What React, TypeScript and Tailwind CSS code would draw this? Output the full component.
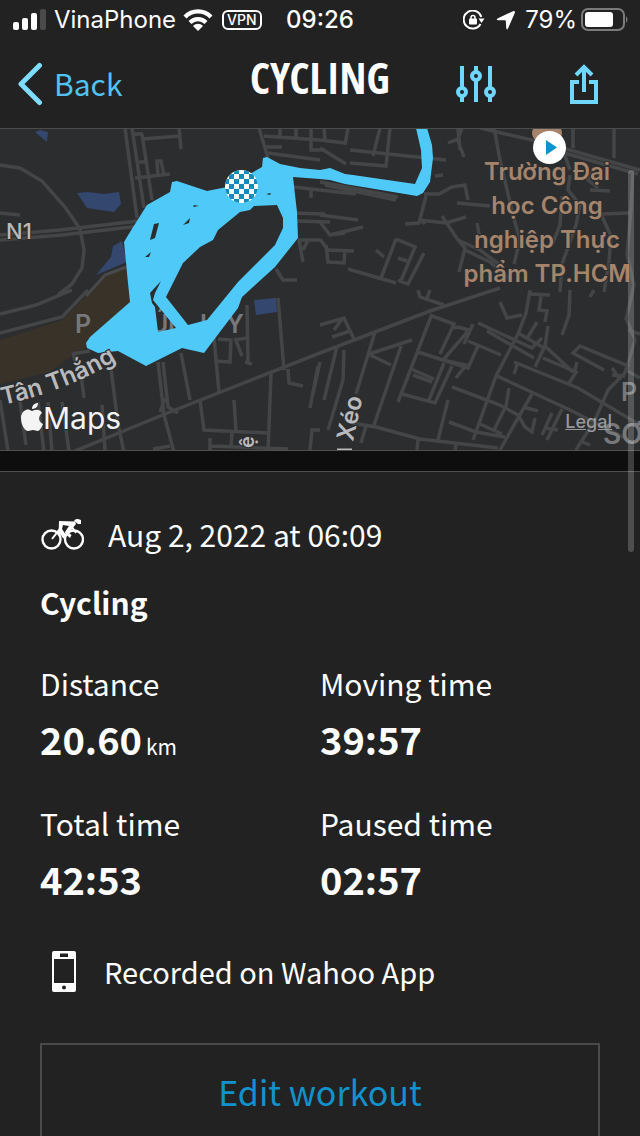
import React from "react";

const roads = [
  "M0 165 L20 168 L42 181 L65 207 L80 229 L84 250 L82 268 L72 284 L58 295",
  "M0 235 L60 230 L138 221",
  "M0 240 L62 235 L140 226 M288 213 L325 214",
  "M0 213 L20 215",
  "M125 128 L137 218",
  "M132 128 L144 208",
  "M142 134 L152 200",
  "M134 134 L143 134 M142 139 L180 136 M179 128 L181 149 M139 162 L145 162 M135 178 L170 174 M158 175 L157 161 L161 161 L164 175",
  "M259 128 L268 158",
  "M264 136 L320 140 M280 129 L280 137 M296 129 L296 138 M311 129 L311 150 L325 150 M266 147 L282 147 M268 153 L320 160 M294 187 L320 190 M311 190 L311 198",
  "M298 240 L320 240 M299 240 L303 262 M308 240 L303 250 M276 269 L283 280 L297 280",
  "M297 221 L330 222 M325 185 L396 200",
  "M320 140 L345 143 M324 128 L325 140 M348 128 L345 145 M380 128 L373 156 M390 128 L386 166 L350 163 M350 150 L446 160 M320 148 L346 164",
  "M320 190 L356 194 M320 182 L398 197",
  "M426 196 L419 223 L405 224 M419 218 L425 224 M435 176 L443 175",
  "M424 194 L439 194 L452 187 L465 185 L468 200 M457 203 L490 206",
  "M448 143 L458 139 L462 128 M458 141 L464 157 M458 128 L460 150",
  "M320 215 L358 220 M320 222 L330 235 L363 227 M329 235 L345 233 M320 239 L328 250 L354 251 M326 245 L328 262 L344 263 L345 250 M348 269 L396 283 M396 239 L381 278 M396 239 L415 247 L400 283 M398 258 L407 261 M376 250 L384 257 M424 253 L408 284 L398 280",
  "M419 220 L446 223 L466 217 M442 216 L458 240 L465 248 L459 272 M458 240 L480 250 L500 265 M465 250 L490 262 L510 280",
  "M494 128 L500 160 L513 215 L520 240 L514 264 M477 223 L480 239",
  "M550 144 L563 150 L570 170 M562 196 L560 225 L552 245 M590 190 L610 191 M600 214 L630 213",
  "M573 128 L573 148 M614 128 L614 158 M480 128 L545 143 L640 170 M540 146 L638 174",
  "M570 175 L568 190 L580 205 L576 225 L562 264 L560 292 M600 212 L611 236 L609 262 L604 292",
  "M594 167 L588 180 L598 188 M602 170 L597 180",
  "M633 170 L631 210 L627 255 L634 285 L626 320",
  "M0 314 L36 305 L72 290",
  "M0 333 L62 317 L88 290",
  "M72 354 L90 351 M73 352 L75 361",
  "M70 453 L165 414 L320 353 L430 311 L500 288",
  "M158 362 L164 415 L174 452 M163 362 L168 407 L178 413 M165 398 L160 412",
  "M80 366 L84 398 M111 369 L118 424 L124 452 M181 353 L190 400 M62 402 L69 451 M48 402 L52 452 M38 402 L44 452 M20 402 L26 445 M0 400 L8 451 M102 405 L105 450",
  "M214 338 L219 392 M247 305 L248 362 M278 298 L284 370 M214 361 L230 362 L231 340 L218 339 M235 338 L242 356 M235 340 L247 338 M245 362 L252 364",
  "M271 374 L268 452 M200 400 L204 430 L268 433 M234 400 L236 431 M210 438 L210 450 M211 446 L288 449 M232 432 L231 447",
  "M288 369 L289 383 L303 386 M318 366 L310 408 M320 430 L312 430 L310 450 M153 449 L170 446",
  "M320 325 L344 318 L354 339 M342 319 L334 330 M332 337 L350 331 M337 346 L324 400 M344 350 L343 380 L328 430 M320 362 L313 394 M375 332 L356 394",
  "M369 354 L412 340 M370 355 L391 365 M401 346 L373 428",
  "M352 423 L376 427 L420 439 L498 448 M366 426 L361 443 M418 440 L417 450 M456 445 L455 451",
  "M432 314 L398 402 M432 316 L454 324 L440 354 M454 328 L458 327 L469 330 L444 359 M418 352 L468 368 L478 346 M473 324 L464 344 M439 359 L466 365 L456 378 M468 341 L501 355",
  "M411 369 L434 379 M413 375 L432 382 M402 394 L435 403 L452 366 M429 400 L444 363",
  "M478 323 L532 348 L542 338 M487 331 L534 358 M530 290 L526 313 L518 334 L496 376 L482 415 L473 440",
  "M418 290 L420 297 L444 305 M430 290 L426 301 M500 302 L507 318 L522 315 M528 294 L550 295 M541 296 L539 310 L547 311 L545 322 M518 333 L544 348 L535 367 M548 326 L545 346 L573 372 M537 322 L528 337",
  "M570 290 L569 315 L562 335 M594 290 L590 297",
  "M497 376 L570 410 L625 438 M514 362 L578 388 L640 425 M518 362 L514 374 M543 358 L576 372 L568 385 M577 362 L574 373",
  "M604 370 L573 353 L580 346 L628 366 L624 374 L608 390 L595 420 L576 450 M612 368 L619 378 M612 375 L625 376",
  "M452 387 L500 405 L518 415 L525 427 L532 432 L535 418 M509 388 L506 406 L494 430 M532 394 L514 425 L500 450",
  "M449 422 L476 432 L505 437 M480 424 L502 434 M448 400 L438 440",
  "M523 407 L538 411 M562 409 L547 440 M552 413 L542 435 M545 428 L558 430 M580 441 L590 445 M628 330 L640 334 M626 318 L635 340 L626 370 L640 378",
];

const checks = Array.from({ length: 64 }, (_, i) => ({ x: i % 8, y: Math.floor(i / 8) })).filter(
  (c) => (c.x + c.y) % 2 === 0,
);

function RouteMap() {
  return (
    <svg
      viewBox="0 129 640 321"
      preserveAspectRatio="xMidYMid slice"
      className="block h-[321px] w-full shrink-0 bg-[#2c2d2f]"
      role="img"
      aria-label="Route map"
    >
      <path d="M0 340 L62 320 L92 290 L110 272 L130 266 L135 305 L90 345 L72 356 L50 372 L0 384Z" fill="#383228" />
      <path d="M86 296 L105 275 L126 267" stroke="#48494b" strokeWidth="3" fill="none" />
      <path
        d="M35 132 L40 130 L48 132 L47 142 Z M77 193 L88 192 L104 194 L119 192 L121 204 L114 212 L87 208 Z M96 275 L111 257 L113 246 L122 241 L127 262 Z M254 300 L276 298 L277 312 L256 315Z"
        fill="#33476f"
      />
      <g stroke="#444547" strokeWidth="3.500" fill="none">
        {roads.map((d) => (
          <path key={d} d={d} />
        ))}
      </g>
      <g fontFamily='Inter, "Liberation Sans", sans-serif' fill="#77787b" fontSize="25" fontWeight="600">
        <text x="75" y="333">P</text>
        <text x="150" y="333">Ú</text>
        <text x="168" y="333">L</text>
        <text x="200" y="333">L</text>
        <text x="226" y="333">Y</text>
        <text x="621" y="401">P</text>
        <text x="603" y="444" fontSize="28">SƠ</text>
      </g>
      <path
        fill="#4fcaf8"
        fillRule="evenodd"
        d="M267 157 L280 164 L300 168 L320 170 L330 168 L345 174 L353 175 L415 184 L422 168 L421 150 L416 128 L427 128 L432 145 L433 158 L430 182 L423 193 L417 196 L345 184 L330 180 L320 179 L293 177 L297 212 L298 238 L275 267 L242 297 L238 308 L204 353 L182 348 L146 366 L118 351 L98 353 L87 348 L86 343 L90 337 L130 302 L128 283 L124 242 L130 232 L147 205 L170 192 L172 182 L177 181 L207 191 L227 187 L262 167 L263 158 Z
        M277 205 L254 206 L250 210 L240 212 L218 230 L213 240 L200 247 L183 263 L166 297 L188 325 L207 320 L238 282 L275 245 L283 228 L283 218 Z
        M161 281 L150 293 L152 303 L155 307 L158 332 L176 328 L153 300 L155 293 Z
        M159 223 L154 224 L150 240 L155 238 Z M190 218 L183 225 L189 223 Z M193 207 L199 206 L194 205 Z M151 252 L145 257 L149 257 Z M266 194 L271 193 L270 195 Z"
      />

      <svg x="225" y="170" width="33" height="33" viewBox="0 0 33 33">
        <clipPath id="flag">
          <circle cx="16.500" cy="16.500" r="16.500" />
        </clipPath>
        <g clipPath="url(#flag)">
          <rect width="33" height="33" fill="#fff" />
          {checks.map((c) => (
            <rect key={`${c.x}-${c.y}`} x={c.x * 5 - 1} y={c.y * 5 - 1} width="5" height="5" fill="#128cbc" />
          ))}
        </g>
      </svg>

      <g
        fontFamily='Inter, "Liberation Sans", sans-serif'
        fontSize="24"
        fontWeight="600"
        textAnchor="middle"
        fill="#a5846c"
        stroke="#2c2d2f"
        strokeWidth="2"
        paintOrder="stroke"
      >
        <text x="547" y="180">Trường Đại</text>
        <text x="547" y="214">học Công</text>
        <text x="547" y="248">nghiệp Thực</text>
        <text x="547" y="282">phẩm TP.HCM</text>
      </g>
      <ellipse cx="547" cy="133" rx="15" ry="11" fill="#a5826a" />
      <circle cx="549.500" cy="147.500" r="16.500" fill="#fff" />
      <path d="M546 140 L557 147.500 L546 155 Z" fill="#0b93cb" />

      <g fontFamily='Inter, "Liberation Sans", sans-serif' fill="#b9babd" stroke="#2c2d2f" strokeWidth="2" paintOrder="stroke">
        <text x="6" y="239" fontSize="22" fontWeight="500">N1</text>
        <path id="tan-thang" d="M3 405 Q70 390 121 358" fill="none" stroke="none" />
        <text fontSize="24" fontWeight="600">
          <textPath href="#tan-thang">Tân Thắng</textPath>
        </text>
        <text fontSize="24" fontWeight="600" transform="translate(353 442) rotate(-78)">Xéo</text>
        <text fontSize="20" fontWeight="600" transform="translate(254 448) rotate(-90)">ệ</text>
      </g>
      <path d="M337 449.500 H352" stroke="#b9babd" strokeWidth="2" />

      <g fill="#f4f4f4">
        <path d="M32 411 C30 410 28 409 26 410 C23 411 21 414 21 418 C21 425 25 431 28 431 C30 431 31 430 33 430 C35 430 36 431 38 431 C40 430 42 427 43 424 C38 422 38 416 42 413 C40 409 36 409 32 411 Z M32 409 C32 405 35 403 38 403 C38 406 36 409 32 409 Z" />
        <text x="43" y="429" fontFamily='Inter, "Liberation Sans", sans-serif' fontSize="30" stroke="#2c2d2f" strokeWidth="2" paintOrder="stroke">
          Maps
        </text>
      </g>
    </svg>
  );
}

function StatusBar() {
  return (
    <div className="flex h-10 items-center px-3 font-[Inter,'Liberation_Sans',sans-serif] text-2xl">
      <div className="flex flex-1 items-center">
        <svg width="34" height="22" viewBox="0 0 34 22" fill="#fff" aria-hidden="true">
          <rect x="1" y="13" width="6" height="8" rx="2" />
          <rect x="10" y="9" width="6" height="12" rx="2" />
          <rect x="19" y="4" width="6" height="17" rx="2" />
          <rect x="28" y="0" width="6" height="21" rx="2" fill="#4a4a4a" />
        </svg>
        <span className="ml-2">VinaPhone</span>
        <svg className="ml-1.5" width="32" height="24" viewBox="0 0 32 24" fill="none" stroke="#fff" strokeWidth="4.200" aria-hidden="true">
          <path d="M3 9 C10 1.500 22 1.500 29 9" />
          <path d="M8 14.500 C12.500 10 19.500 10 24 14.500" />
          <path d="M16 23 L11 18 C14 15 18 15 21 18 Z" fill="#fff" stroke="none" />
        </svg>
        <span className="ml-2 flex h-5 items-center rounded-md border-2 border-white px-[3px] text-sm font-medium">VPN</span>
      </div>
      <time className="font-medium">09:26</time>
      <div className="flex flex-1 items-center justify-end">
        <svg width="22" height="20" viewBox="0 0 22 20" fill="none" stroke="#fff" strokeWidth="2" aria-hidden="true">
          <path d="M17.500 14 A9 9 0 1 1 18.300 7" />
          <path d="M15.500 8.500 H21.500 L18.500 13 Z" fill="#fff" stroke="none" />
          <rect x="6" y="8.500" width="8" height="6" rx="1" fill="#fff" stroke="none" />
          <path d="M8 9 V7.500 A2 2 0 0 1 12 7.500 V9" strokeWidth="1.500" />
        </svg>
        <svg className="ml-2.5" width="22" height="20" viewBox="0 0 22 20" fill="#fff" aria-hidden="true">
          <path d="M18 1.200 Q20.500 0.500 19.800 3 L13 18.500 Q12 20.500 11.200 18 L10.800 11 Q10.700 10.300 10 10.300 L3 10.200 Q0.500 9.500 3 8.300 Z" />
        </svg>
        <span className="ml-2">79%</span>
        <svg className="ml-1" width="47" height="24" viewBox="0 0 47 24" aria-hidden="true">
          <rect x="1" y="1" width="42" height="21" rx="6" fill="none" stroke="#7b7b7b" strokeWidth="2" />
          <rect x="4" y="4" width="28" height="15" rx="3" fill="#fff" />
          <path d="M45 8 Q48 11.500 45 15 Z" fill="#7b7b7b" />
        </svg>
      </div>
    </div>
  );
}

const stats = [
  { label: "Distance", value: "20.60", unit: "km" },
  { label: "Moving time", value: "39:57" },
  { label: "Total time", value: "42:53" },
  { label: "Paused time", value: "02:57" },
];

export default function App() {
  return (
    <div className="relative flex h-screen flex-col overflow-hidden bg-[#222] font-['Noto_Sans_CJK_SC','Noto_Sans',sans-serif] text-white">
      <header className="shrink-0">
        <StatusBar />
        <nav className="grid h-[89px] grid-cols-[1fr_auto_1fr] items-center border-b border-[#4c4c4c] px-4">
          <button type="button" className="flex items-center gap-3 justify-self-start text-[30px] leading-10 text-[#4fc3f2]">
            <svg width="26" height="44" viewBox="0 0 26 44" fill="none" stroke="#7fdbff" strokeWidth="5" strokeLinecap="round" strokeLinejoin="round" aria-hidden="true">
              <path d="M23.500 3.500 L5 22 L23.500 40.500" />
            </svg>
            <span className="pb-0.5">Back</span>
          </button>
          <h1 className="pb-3 font-['Open_Sans_Condensed','Roboto_Condensed','Noto_Sans_ExtraCondensed','Liberation_Sans_Narrow','Liberation_Sans',sans-serif] text-[43px] leading-12 font-extrabold">
            CYCLING
          </h1>
          <div className="flex items-center gap-[74px] justify-self-end pr-[26px]">
            <button type="button" aria-label="Customize">
              <svg width="40" height="36" viewBox="0 0 40 36" fill="none" stroke="#6fd6ff" strokeWidth="4" aria-hidden="true">
                <path d="M6 0 V22 M6 30 V36 M20 0 V6 M20 14 V36 M34 0 V22 M34 30 V36" />
                <circle cx="6" cy="26" r="4" />
                <circle cx="20" cy="10" r="4" />
                <circle cx="34" cy="26" r="4" />
              </svg>
            </button>
            <button type="button" aria-label="Share">
              <svg width="28" height="40" viewBox="0 0 28 40" fill="none" stroke="#6fd6ff" strokeWidth="4" aria-hidden="true">
                <path d="M9 18 H2 V38 H26 V18 H19 M14 28 V3 M6 11 L14 3 L22 11" />
              </svg>
            </button>
          </div>
        </nav>
      </header>

      <main className="flex flex-1 flex-col overflow-hidden">
        <div className="relative shrink-0">
          <RouteMap />
          <a href="#legal" className="absolute right-7 bottom-4 font-[Inter,'Liberation_Sans',sans-serif] text-lg leading-6 font-medium text-[#98999c] underline">
            Legal
          </a>
        </div>
        <div className="h-[22px] shrink-0 border-y border-[#505050] bg-[#0e0e0e]" />

        <section className="shrink-0 px-10 pt-[42px]">
          <div className="flex h-10 items-center gap-6 text-[30px] leading-10">
            <svg width="44" height="32" viewBox="0 0 44 32" fill="none" stroke="#fff" strokeWidth="2.400" aria-hidden="true">
              <circle cx="11.500" cy="21.500" r="9" />
              <circle cx="34" cy="21.500" r="9" />
              <path d="M19 3 L35 3.500 L36 6 L33.500 9 L29 15 L31.500 17 L30 20 L25.500 16 L25 14 L29 8 L23 7 L22 11 L26 17 L24 19 L21 15 L20 19 L18.500 18 Z" fill="#fff" stroke="none" />
              <path d="M34 3 Q35 0.500 38 1 L41 2 V6 L38 6 Z" fill="#fff" stroke="none" />
              <path d="M12 21 L19 12 L24 20 M32 9 L36 15" strokeWidth="2" />
            </svg>
            <time>Aug 2, 2022 at 06:09</time>
          </div>
          <h2 className="mt-7 text-[30px] leading-10 font-bold">Cycling</h2>
          <dl className="mt-[41px] grid grid-cols-2 gap-y-10">
            {stats.map((s) => (
              <div key={s.label}>
                <dt className="text-[30px] leading-10">{s.label}</dt>
                <dd className="mt-3 flex h-12 items-baseline gap-1 text-[38px] leading-12 font-bold">
                  {s.value}
                  {s.unit && <span className="text-[21px] leading-6 font-normal">{s.unit}</span>}
                </dd>
              </div>
            ))}
          </dl>
          <div className="mt-12 flex h-10 items-center gap-7 pl-3 text-[29px] leading-10">
            <svg width="24" height="41" viewBox="0 0 24 41" aria-hidden="true">
              <path
                fill="#fff"
                fillRule="evenodd"
                d="M2 0 H22 Q24 0 24 2 V39 Q24 41 22 41 H2 Q0 41 0 39 V2 Q0 0 2 0 Z M2 8 V32 H22 V8 Z M8 2.500 V6 H16 V2.500 Z M12 34.500 A2 2 0 1 0 12 38.500 A2 2 0 1 0 12 34.500 Z"
              />
            </svg>
            <span>Recorded on Wahoo App</span>
          </div>
          <button type="button" className="mt-13 block h-[98px] w-full border-2 border-[#4a4a4a] text-[34px] leading-10 text-[#1192cc]">
            Edit workout
          </button>
        </section>
      </main>

      <div className="absolute top-[170px] right-1.5 h-[382px] w-1.5 rounded-full bg-white/20" />
    </div>
  );
}
